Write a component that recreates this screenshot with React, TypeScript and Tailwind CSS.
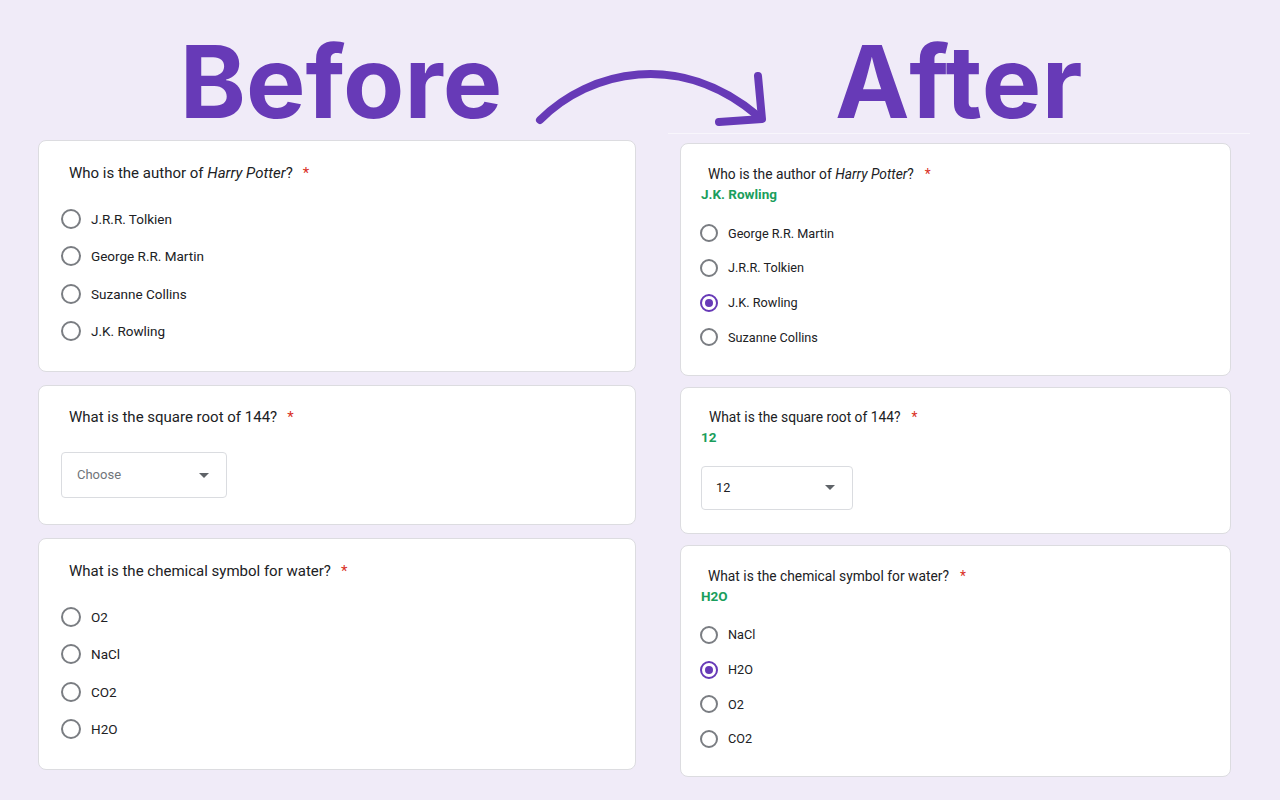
import React from 'react';

type Option = { label: string; checked?: boolean };

const Radio: React.FC<{ checked?: boolean; size: 'lg' | 'sm' }> = ({ checked, size }) => {
  const box = size === 'lg' ? 'w-[20px] h-[20px]' : 'w-[18px] h-[18px]';
  const dot = size === 'lg' ? 'w-[9px] h-[9px]' : 'w-[8px] h-[8px]';
  return (
    <span
      className={`${box} shrink-0 rounded-full border-2 flex items-center justify-center ${
        checked ? 'border-[#673ab7]' : 'border-[#7a7d82]'
      }`}
    >
      {checked && <span className={`${dot} rounded-full bg-[#673ab7]`} />}
    </span>
  );
};

const Caret = () => (
  <svg width="10" height="5" viewBox="0 0 10 5" className="shrink-0">
    <path d="M0 0 L10 0 L5 5 Z" fill="#5f6368" />
  </svg>
);

const Question: React.FC<{ children: React.ReactNode; small?: boolean }> = ({ children, small }) => (
  <div
    className={
      small
        ? 'pl-[8px] text-[13.8px] leading-[18px] text-[#202124]'
        : 'pl-[8px] text-[15px] leading-[20px] text-[#202124]'
    }
  >
    {children}
    <span className={small ? 'ml-[11px] text-[#d93025]' : 'ml-[10px] text-[#d93025]'}>*</span>
  </div>
);

const BeforeRadioCard: React.FC<{ question: React.ReactNode; options: Option[] }> = ({ question, options }) => (
  <div className="bg-white border border-[#dcdce0] rounded-lg pl-[22px] pr-6 pt-[22px] pb-[21px]">
    <Question>{question}</Question>
    <div className="mt-[17px] flex flex-col">
      {options.map(o => (
        <div key={o.label} className="h-[37.5px] flex items-center gap-[10px] text-[13.5px] text-[#202124]">
          <Radio size="lg" />
          <span>{o.label}</span>
        </div>
      ))}
    </div>
  </div>
);

const AfterRadioCard: React.FC<{ question: React.ReactNode; answer: string; options: Option[] }> = ({
  question,
  answer,
  options,
}) => (
  <div className="bg-white border border-[#dcdce0] rounded-lg pl-[19px] pr-6 pt-[21px] pb-[20px]">
    <Question small>{question}</Question>
    <div className="mt-[1px] text-[13.5px] leading-[20px] font-bold text-[#1a9e5c] pl-[1px]">{answer}</div>
    <div className="mt-[12px] flex flex-col">
      {options.map(o => (
        <div key={o.label} className="h-[34.67px] flex items-center gap-[10px] text-[12.7px] text-[#202124]">
          <Radio size="sm" checked={o.checked} />
          <span>{o.label}</span>
        </div>
      ))}
    </div>
  </div>
);

const HarryPotter = () => (
  <>
    Who is the author of <i>Harry Potter</i>?
  </>
);

export default function App() {
  return (
    <div className="w-[1280px] h-[800px] overflow-hidden bg-[#f0ebf8] font-['Roboto',_'Liberation_Sans',_sans-serif]">
      {/* Header */}
      <div className="relative h-[133px] flex pl-[38px] pr-[30px] pt-[32px]">
        <div className="w-[598px] shrink-0 text-center pl-[8px]">
          <h1 className="font-['Inter',_sans-serif] font-bold text-[100px] leading-[100px] text-[#673ab7]">
            Before
          </h1>
        </div>
        <div className="ml-[32px] w-[582px] shrink-0 text-center">
          <h1 className="font-['Inter',_sans-serif] font-bold text-[100px] leading-[100px] text-[#673ab7] tracking-[0.5px]">
            After
          </h1>
        </div>
        <svg className="absolute inset-0 pointer-events-none" width="1280" height="133" viewBox="0 0 1280 133">
          <g fill="none" stroke="#673ab7" strokeWidth="8" strokeLinecap="round" strokeLinejoin="round">
            <path d="M540 120 C 590 70, 680 50, 758 116" />
            <path d="M758 76 L762 119 L719 122" />
          </g>
        </svg>
      </div>

      {/* Columns */}
      <div className="flex items-start pl-[38px] pr-[30px]">
        <div className="w-[598px] shrink-0 mt-[7px] flex flex-col gap-[13px]">
          <BeforeRadioCard
            question={<HarryPotter />}
            options={[
              { label: 'J.R.R. Tolkien' },
              { label: 'George R.R. Martin' },
              { label: 'Suzanne Collins' },
              { label: 'J.K. Rowling' },
            ]}
          />
          <div className="bg-white border border-[#dcdce0] rounded-lg pl-[22px] pr-6 pt-[21px] pb-[26px]">
            <Question>What is the square root of 144?</Question>
            <div className="mt-[25px] w-[166px] h-[46px] border border-[#dadce0] rounded-[4px] flex items-center justify-between pl-[15px] pr-[17px]">
              <span className="text-[13px] text-[#70757a]">Choose</span>
              <Caret />
            </div>
          </div>
          <BeforeRadioCard
            question="What is the chemical symbol for water?"
            options={[{ label: 'O2' }, { label: 'NaCl' }, { label: 'CO2' }, { label: 'H2O' }]}
          />
        </div>

        <div className="ml-[32px] w-[582px] shrink-0 border-t border-[#f8f6fc] pt-[9px] pl-[12px] pr-[19px] flex flex-col gap-[11px]">
          <AfterRadioCard
            question={<HarryPotter />}
            answer="J.K. Rowling"
            options={[
              { label: 'George R.R. Martin' },
              { label: 'J.R.R. Tolkien' },
              { label: 'J.K. Rowling', checked: true },
              { label: 'Suzanne Collins' },
            ]}
          />
          <div className="bg-white border border-[#dcdce0] rounded-lg pl-[20px] pr-6 pt-[20px] pb-[23px]">
            <Question small>What is the square root of 144?</Question>
            <div className="mt-[1px] text-[13.5px] leading-[20px] font-bold text-[#1a9e5c]">12</div>
            <div className="mt-[19px] w-[152px] h-[44px] border border-[#dadce0] rounded-[4px] flex items-center justify-between pl-[14px] pr-[17px]">
              <span className="text-[12.7px] text-[#202124]">12</span>
              <Caret />
            </div>
          </div>
          <AfterRadioCard
            question="What is the chemical symbol for water?"
            answer="H2O"
            options={[
              { label: 'NaCl' },
              { label: 'H2O', checked: true },
              { label: 'O2' },
              { label: 'CO2' },
            ]}
          />
        </div>
      </div>
    </div>
  );
}
